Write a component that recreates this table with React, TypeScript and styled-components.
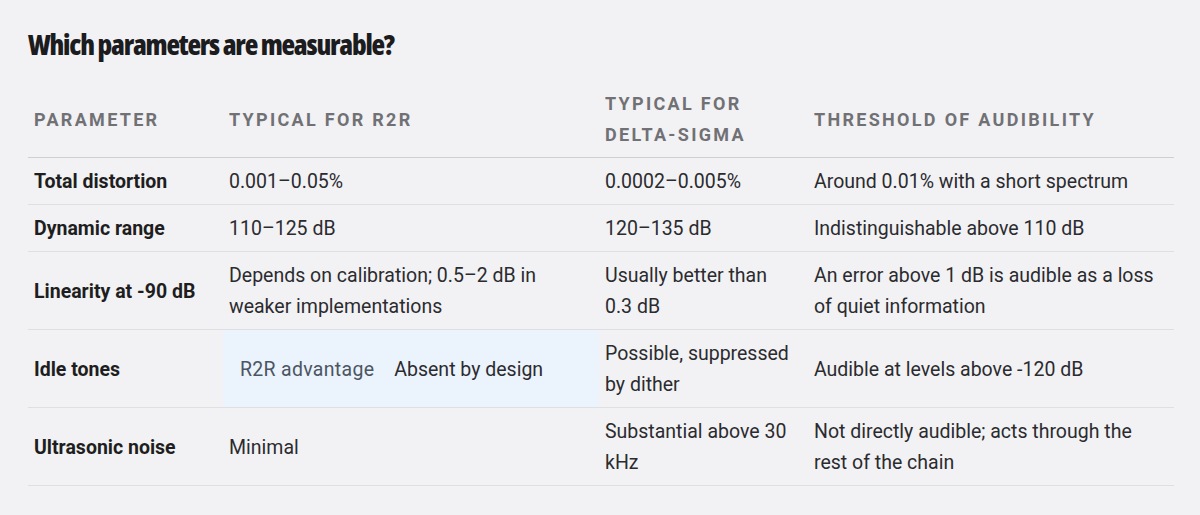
import React from "react";
import styled, { createGlobalStyle } from "styled-components";

const Global = createGlobalStyle`
  html, body { margin: 0; padding: 0; background: #f2f2f4; }
  body { font-family: Roboto, "Liberation Sans", sans-serif; }
`;

const Page = styled.div`
  padding: 25px 26px 30px 28px;
`;

const Title = styled.h2`
  margin: 0 0 17px 0;
  font-family: "Open Sans", Roboto, "Liberation Sans", sans-serif;
  font-stretch: 75%;
  font-weight: 800;
  font-size: 28px;
  line-height: 38px;
  letter-spacing: -1.2px;
  color: #1c1c1f;
`;

const Table = styled.table`
  width: 1146px;
  border-collapse: collapse;
  table-layout: fixed;
`;

const Th = styled.th<{ $w: number }>`
  box-sizing: border-box;
  width: ${(p) => p.$w}px;
  text-align: left;
  vertical-align: middle;
  padding: 8px 12px 7px 6px;
  font-size: 18px;
  line-height: 31px;
  font-weight: 700;
  letter-spacing: 2.3px;
  text-transform: uppercase;
  color: #717175;
  border-bottom: 1px solid #cfcfd3;
`;

const NoWrap = styled.span`
  white-space: nowrap;
`;

const Row = styled.tr`
  border-bottom: 1px solid #dfdfe3;
`;

const Cell = styled.td<{ $hl?: boolean }>`
  box-sizing: border-box;
  padding: 8px 12px 7px 6px;
  font-size: 19.5px;
  line-height: 31px;
  color: #2b2b2f;
  vertical-align: middle;
  background: ${(p) => (p.$hl ? "#ebf3fc" : "transparent")};
`;

const NameCell = styled(Cell)`
  font-weight: 700;
  color: #1e1e21;
`;

const Badge = styled.span`
  display: inline-block;
  padding: 0 11px;
  margin-right: 9px;
  color: #4b5563;
  letter-spacing: 0.3px;
`;

type R = { name: string; r2r: string; ds: string; thr: string; adv?: boolean };

const rows: R[] = [
  { name: "Total distortion", r2r: "0.001–0.05%", ds: "0.0002–0.005%", thr: "Around 0.01% with a short spectrum" },
  { name: "Dynamic range", r2r: "110–125 dB", ds: "120–135 dB", thr: "Indistinguishable above 110 dB" },
  {
    name: "Linearity at -90 dB",
    r2r: "Depends on calibration; 0.5–2 dB in weaker implementations",
    ds: "Usually better than 0.3 dB",
    thr: "An error above 1 dB is audible as a loss of quiet information",
  },
  { name: "Idle tones", r2r: "Absent by design", ds: "Possible, suppressed by dither", thr: "Audible at levels above -120 dB", adv: true },
  {
    name: "Ultrasonic noise",
    r2r: "Minimal",
    ds: "Substantial above 30 kHz",
    thr: "Not directly audible; acts through the rest of the chain",
  },
];

export default function App() {
  return (
    <>
      <Global />
      <Page>
        <Title>Which parameters are measurable?</Title>
        <Table>
          <thead>
            <tr>
              <Th $w={195}>Parameter</Th>
              <Th $w={376}>Typical for R2R</Th>
              <Th $w={209}>
                Typical for <NoWrap>delta-sigma</NoWrap>
              </Th>
              <Th $w={366}>Threshold of audibility</Th>
            </tr>
          </thead>
          <tbody>
            {rows.map((r) => (
              <Row key={r.name}>
                <NameCell>{r.name}</NameCell>
                <Cell $hl={r.adv}>
                  {r.adv && <Badge>R2R advantage</Badge>}
                  {r.r2r}
                </Cell>
                <Cell>{r.ds}</Cell>
                <Cell>{r.thr}</Cell>
              </Row>
            ))}
          </tbody>
        </Table>
      </Page>
    </>
  );
}
